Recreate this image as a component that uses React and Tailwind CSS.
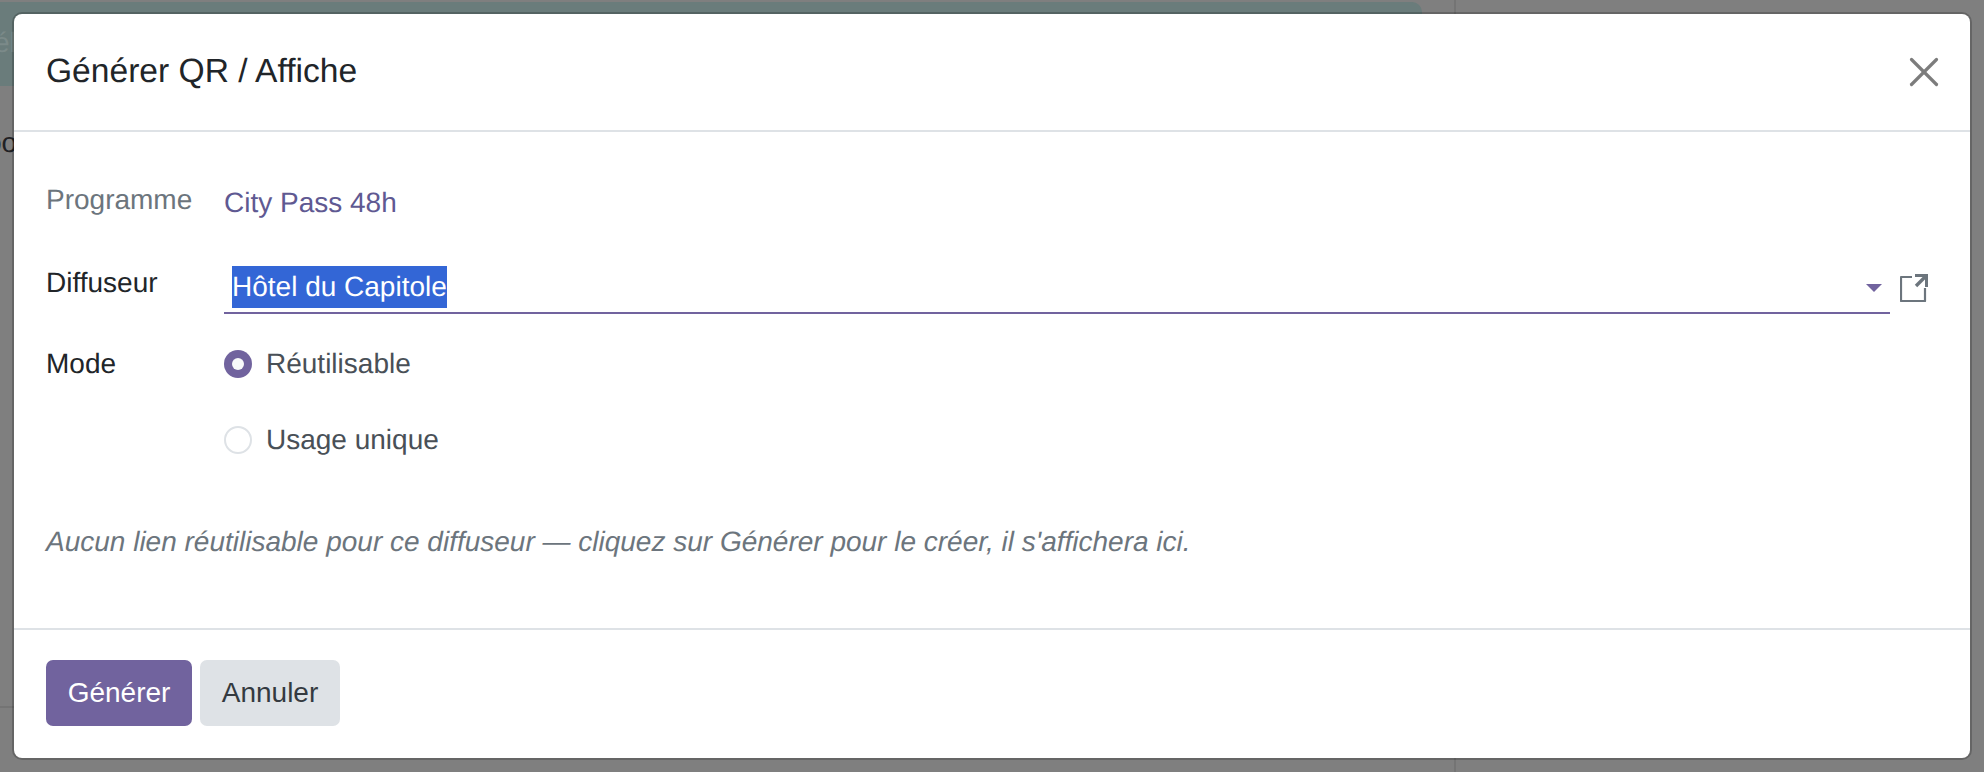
function Radio({ checked, label }) {
  return (
    <div className="flex items-center h-[76px]">
      {checked ? (
        <span className="w-[28px] h-[28px] rounded-full bg-[#71639e] flex items-center justify-center shrink-0">
          <span className="w-[12px] h-[12px] rounded-full bg-[#f8f9fa]" />
        </span>
      ) : (
        <span className="w-[28px] h-[28px] rounded-full border-2 border-[#dee2e6] bg-white shrink-0" />
      )}
      <span className="ml-[14px] text-[28px] text-[#495057]">{label}</span>
    </div>
  );
}

export default function App() {
  return (
    <div className="relative w-[1984px] h-[772px] overflow-hidden bg-[#7f7f7f] font-['Liberation_Sans',Arial,sans-serif] [text-rendering:geometricPrecision]">
      {/* page behind the dialog */}
      <div className="absolute left-0 top-[2px] w-[1422px] h-[84px] rounded-r-[10px] bg-[#6a7c7b] overflow-hidden">
        <span className="absolute left-[-6px] top-[23px] text-[28px] leading-[36px] text-[#7b8a89]">él</span>
      </div>
      <span className="absolute left-[-14px] top-[126px] text-[28px] leading-[34px] text-[#1f2124]">oo</span>
      <div className="absolute left-[1454px] top-0 w-[2px] h-full bg-[#747474]" />
      <div className="absolute left-0 top-[706px] w-[1454px] h-[2px] bg-[#747474]" />

      {/* dialog */}
      <div className="absolute left-[14px] top-[14px] w-[1956px] h-[744px] flex flex-col rounded-[8px] bg-white shadow-[0_0_0_2px_rgba(0,0,0,0.2)]">
        <header className="h-[118px] shrink-0 flex items-center justify-between pl-[32px] pr-[31px] border-b-2 border-[#dee2e6]">
          <h4 className="text-[33.6px] text-[#212529] leading-[40px]">Générer QR / Affiche</h4>
          <svg width="30" height="30" viewBox="0 0 30 30" className="text-[#7c7c7c]" fill="none" stroke="currentColor" strokeWidth="3.2" strokeLinecap="round">
            <line x1="2.5" y1="2.5" x2="27.5" y2="27.5" />
            <line x1="27.5" y1="2.5" x2="2.5" y2="27.5" />
          </svg>
        </header>

        <main className="flex-1 pl-[32px] pr-[42px] pt-[52px]">
          <div className="flex h-[60px]">
            <span className="w-[178px] text-[28px] leading-[32px] text-[#6c757d] shrink-0">Programme</span>
            <span className="text-[28px] leading-[38px] text-[#5f5992]">City Pass 48h</span>
          </div>
          <div className="flex h-[58px] mt-[22px]">
            <span className="w-[178px] text-[28px] leading-[34px] text-[#212529] shrink-0">Diffuseur</span>
            <div className="flex-1 flex items-start">
              <div className="flex-1 h-[48px] flex items-start border-b-2 border-[#71639e] pl-[8px] pr-[8px]">
                <span className="bg-[#3366d6] text-white text-[28px] leading-[42px]">Hôtel du Capitole</span>
                <span className="ml-auto mt-[18px] w-0 h-0 border-x-[8px] border-x-transparent border-t-[8px] border-t-[#71639e]" />
              </div>
              <svg width="28" height="28" viewBox="0 0 28 28" className="ml-[10px] mt-[8px] text-[#6c757d]" fill="none" stroke="currentColor" strokeWidth="2.2">
                <path d="M12 3H1v24h24V14" strokeLinejoin="round" />
                <path d="M16 12 26 2" strokeWidth="3.4" />
                <path d="M15 1.5h11.5V13" strokeWidth="3" />
              </svg>
            </div>
          </div>
          <div className="flex mt-[2px]">
            <span className="w-[178px] text-[28px] leading-[76px] text-[#212529] shrink-0">Mode</span>
            <div className="flex flex-col">
              <Radio checked label="Réutilisable" />
              <Radio label="Usage unique" />
            </div>
          </div>
          <p className="mt-[44px] text-[28px] leading-[40px] italic text-[#6c757d]">Aucun lien réutilisable pour ce diffuseur — cliquez sur Générer pour le créer, il s'affichera ici.</p>
        </main>

        <footer className="h-[130px] shrink-0 border-t-2 border-[#dee2e6] flex items-start pl-[32px] pt-[30px] gap-[8px]">
          <button className="h-[66px] w-[146px] rounded-[7px] bg-[#71639e] text-white text-[28px]">Générer</button>
          <button className="h-[66px] w-[140px] rounded-[7px] bg-[#dee2e6] text-[#343a40] text-[28px]">Annuler</button>
        </footer>
      </div>
    </div>
  );
}
